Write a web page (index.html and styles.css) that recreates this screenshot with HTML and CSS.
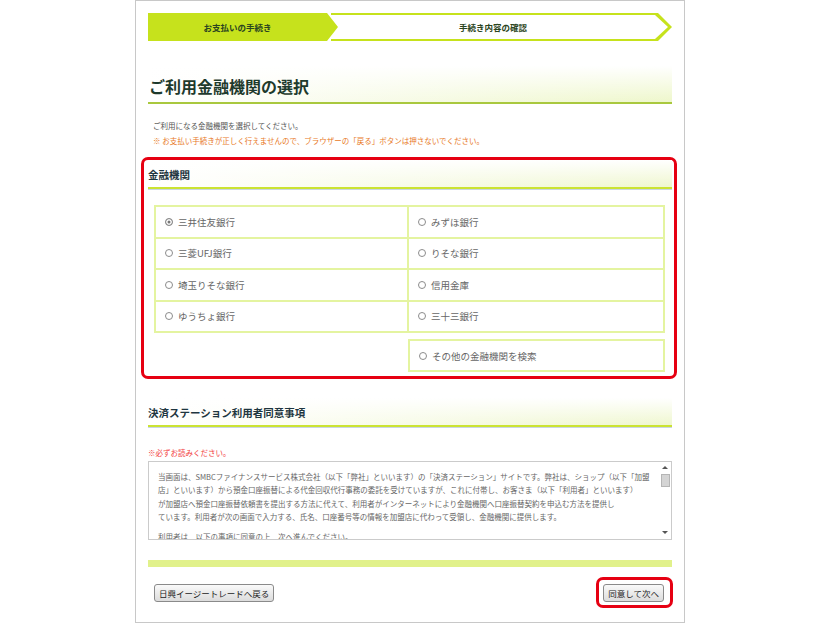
FILE: index.html
```html
<!DOCTYPE html>
<html lang="ja">
<head>
  <meta charset="UTF-8" />
  <meta name="viewport" content="width=device-width, initial-scale=1.0" />
  <title>ご利用金融機関の選択 | 決済ステーション</title>
  <link rel="stylesheet" href="styles.css">
</head>
<body>

  <div class="page">

    <!-- 手続きステップ -->
    <div class="steps">
      <div class="step current">お支払いの手続き</div>
      <div class="step next"><div class="step-inner">手続き内容の確認</div></div>
    </div>

    <h1 class="page-title">ご利用金融機関の選択</h1>

    <div class="intro">
      <p>ご利用になる金融機関を選択してください。</p>
      <p class="warn">※ お支払い手続きが正しく行えませんので、ブラウザーの「戻る」ボタンは押さないでください。</p>
    </div>

    <div class="mark">
      <h2 class="sec-title">金融機関</h2>
      <div class="bank-grid">
        <label class="bank"><input type="radio" name="bank" checked>三井住友銀行</label>
        <label class="bank"><input type="radio" name="bank">みずほ銀行</label>
        <label class="bank"><input type="radio" name="bank">三菱UFJ銀行</label>
        <label class="bank"><input type="radio" name="bank">りそな銀行</label>
        <label class="bank"><input type="radio" name="bank">埼玉りそな銀行</label>
        <label class="bank"><input type="radio" name="bank">信用金庫</label>
        <label class="bank"><input type="radio" name="bank">ゆうちょ銀行</label>
        <label class="bank"><input type="radio" name="bank">三十三銀行</label>
      </div>
      <div class="bank-other">
        <label class="bank"><input type="radio" name="bank">その他の金融機関を検索</label>
      </div>
    </div>

    <h2 class="sec-title consent">決済ステーション利用者同意事項</h2>
    <p class="note">※必ずお読みください。</p>

    <div class="terms">
      <div class="terms-text">
        <p>
          当画面は、SMBCファイナンスサービス株式会社（以下「弊社」といいます）の「決済ステーション」サイトです。弊社は、ショップ（以下「加盟<br>
          店」といいます）から預金口座振替による代金回収代行事務の委託を受けていますが、これに付帯し、お客さま（以下「利用者」といいます）<br>
          が加盟店へ預金口座振替依頼書を提出する方法に代えて、利用者がインターネットにより金融機関へ口座振替契約を申込む方法を提供し<br>
          ています。利用者が次の画面で入力する、氏名、口座番号等の情報を加盟店に代わって受領し、金融機関に提供します。
        </p>
        <p class="para">利用者は、以下の事項に同意の上、次へ進んでください。</p>
      </div>
      <div class="scrollbar">
        <span class="sb-up"></span>
        <span class="sb-thumb"></span>
        <span class="sb-down"></span>
      </div>
    </div>

    <div class="bar"></div>

    <div class="footer">
      <button class="btn back" type="button">日興イージートレードへ戻る</button>
      <div class="next-mark">
        <button class="btn" type="button">同意して次へ</button>
      </div>
    </div>

  </div>

</body>
</html>
```

FILE: styles.css
```css
body {
  margin: 0;
  background: #fff;
  font-family: "Noto Sans CJK JP", "Noto Sans", sans-serif;
  color: #555;
}
p {
  margin: 0;
}
.page {
  width: 550px;
  height: 623px;
  box-sizing: border-box;
  margin: 0 auto;
  padding: 12px 12px 0;
  border: 1px solid #c8c8c8;
}

/* steps */
.steps {
  display: flex;
  height: 28px;
}
.step {
  height: 28px;
  line-height: 28px;
  font-size: 8.5px;
  font-weight: bold;
  color: #2a4420;
  text-align: center;
  background: #c6e21c;
}
.step.current {
  position: relative;
  z-index: 1;
  width: 190px;
  box-sizing: border-box;
  padding-right: 11px;
  clip-path: polygon(0 0, calc(100% - 11px) 0, 100% 50%, calc(100% - 11px) 100%, 0 100%);
}
.step.next {
  width: 341px;
  margin-left: -7px;
  clip-path: polygon(0 0, calc(100% - 14px) 0, 100% 50%, calc(100% - 14px) 100%, 0 100%);
}
.step-inner {
  height: 24px;
  line-height: 24px;
  margin: 2px 4px 2px 0;
  padding-right: 13px;
  background: #fff;
  clip-path: polygon(0 0, calc(100% - 13px) 0, 100% 50%, calc(100% - 13px) 100%, 0 100%);
}

/* headings */
.page-title {
  margin: 25px 0 0;
  height: 38px;
  box-sizing: border-box;
  padding: 10px 0 0 1px;
  font-size: 16px;
  line-height: 20px;
  color: #1e3a2c;
  border-bottom: 2px solid #a9c83e;
  background:
    linear-gradient(to bottom, #fff 0%, rgba(255,255,255,0) 100%),
    linear-gradient(to right, #fff 0%, #eef7cb 100%);
}
.sec-title {
  margin: 0;
  height: 29px;
  box-sizing: border-box;
  padding: 8px 0 0;
  font-size: 10.5px;
  line-height: 14px;
  color: #1e3640;
  border-bottom: 2px solid #cbe332;
  box-shadow: 0 1px 0 #c9d6e2;
  background:
    linear-gradient(to bottom, #fff 0%, rgba(255,255,255,0) 100%),
    linear-gradient(to right, #fff 0%, #eff7cf 100%);
}
.sec-title.consent {
  margin-top: 19px;
}

.intro {
  margin-top: 14px;
  padding-left: 5px;
  font-size: 7.5px;
  line-height: 15px;
  color: #555;
}
.intro .warn {
  color: #e8781e;
}

/* bank selection */
.mark {
  margin: 9px -5px 0 -7px;
  padding: 0 2px 4px 4px;
  border: 3px solid #e60012;
  border-radius: 7px;
}
.bank-grid {
  display: grid;
  grid-template-columns: 251px 1fr;
  gap: 2px;
  margin: 16px 7px 0 6px;
  padding: 2px;
  background: #e4f4a0;
}
.bank {
  display: flex;
  align-items: center;
  height: 29.5px;
  padding-left: 9px;
  background: #fff;
  font-size: 9.5px;
  color: #666;
}
.bank input {
  appearance: none;
  width: 8px;
  height: 8px;
  margin: 0 5px 0 0;
  border: 1px solid #8c8c8c;
  border-radius: 50%;
  background: #fff;
}
.bank input:checked {
  background: #777;
  box-shadow: inset 0 0 0 1.5px #fff;
}
.bank-other {
  width: 257px;
  height: 33px;
  box-sizing: border-box;
  margin: 6px 7px 0 auto;
  border: 2px solid #e4f4a0;
}
.bank-other .bank {
  height: 29px;
}

/* terms */
.note {
  margin-top: 20px;
  font-size: 7.5px;
  line-height: 12px;
  color: #f23c3c;
}
.terms {
  display: flex;
  height: 79px;
  box-sizing: border-box;
  margin-top: 2px;
  border: 1px solid #cbcbcb;
}
.terms-text {
  flex: 1;
  padding: 8px 0 0 9px;
  overflow: hidden;
  white-space: nowrap;
  font-size: 7.5px;
  line-height: 13.3px;
  color: #666;
}
.terms-text .para {
  margin-top: 7px;
}
.scrollbar {
  width: 12px;
  display: flex;
  flex-direction: column;
  align-items: center;
}
.sb-up,
.sb-down {
  width: 0;
  height: 0;
  border-left: 3px solid transparent;
  border-right: 3px solid transparent;
}
.sb-up {
  margin-top: 4px;
  border-bottom: 3px solid #555;
}
.sb-thumb {
  width: 7px;
  height: 11px;
  margin-top: 5px;
  background: #d4d4d4;
  border: 1px solid #b5b5b5;
}
.sb-down {
  margin-top: auto;
  margin-bottom: 5px;
  border-top: 3px solid #555;
}

.bar {
  height: 7px;
  margin-top: 20px;
  background: #e1f18b;
}

/* buttons */
.footer {
  display: flex;
  justify-content: space-between;
  align-items: center;
  margin: 10px -1px 0 0;
}
.btn {
  display: block;
  height: 18px;
  padding: 0 4px;
  border: 1px solid #8a8a8a;
  border-radius: 3px;
  background: linear-gradient(#fafafa, #dcdcdc);
  font-family: inherit;
  font-size: 8.5px;
  line-height: 16px;
  color: #222;
}
.btn.back {
  margin-left: 6px;
}
.next-mark {
  display: flex;
  padding: 4px 6px 3px 4px;
  border: 3px solid #e60012;
  border-radius: 7px;
}
```
